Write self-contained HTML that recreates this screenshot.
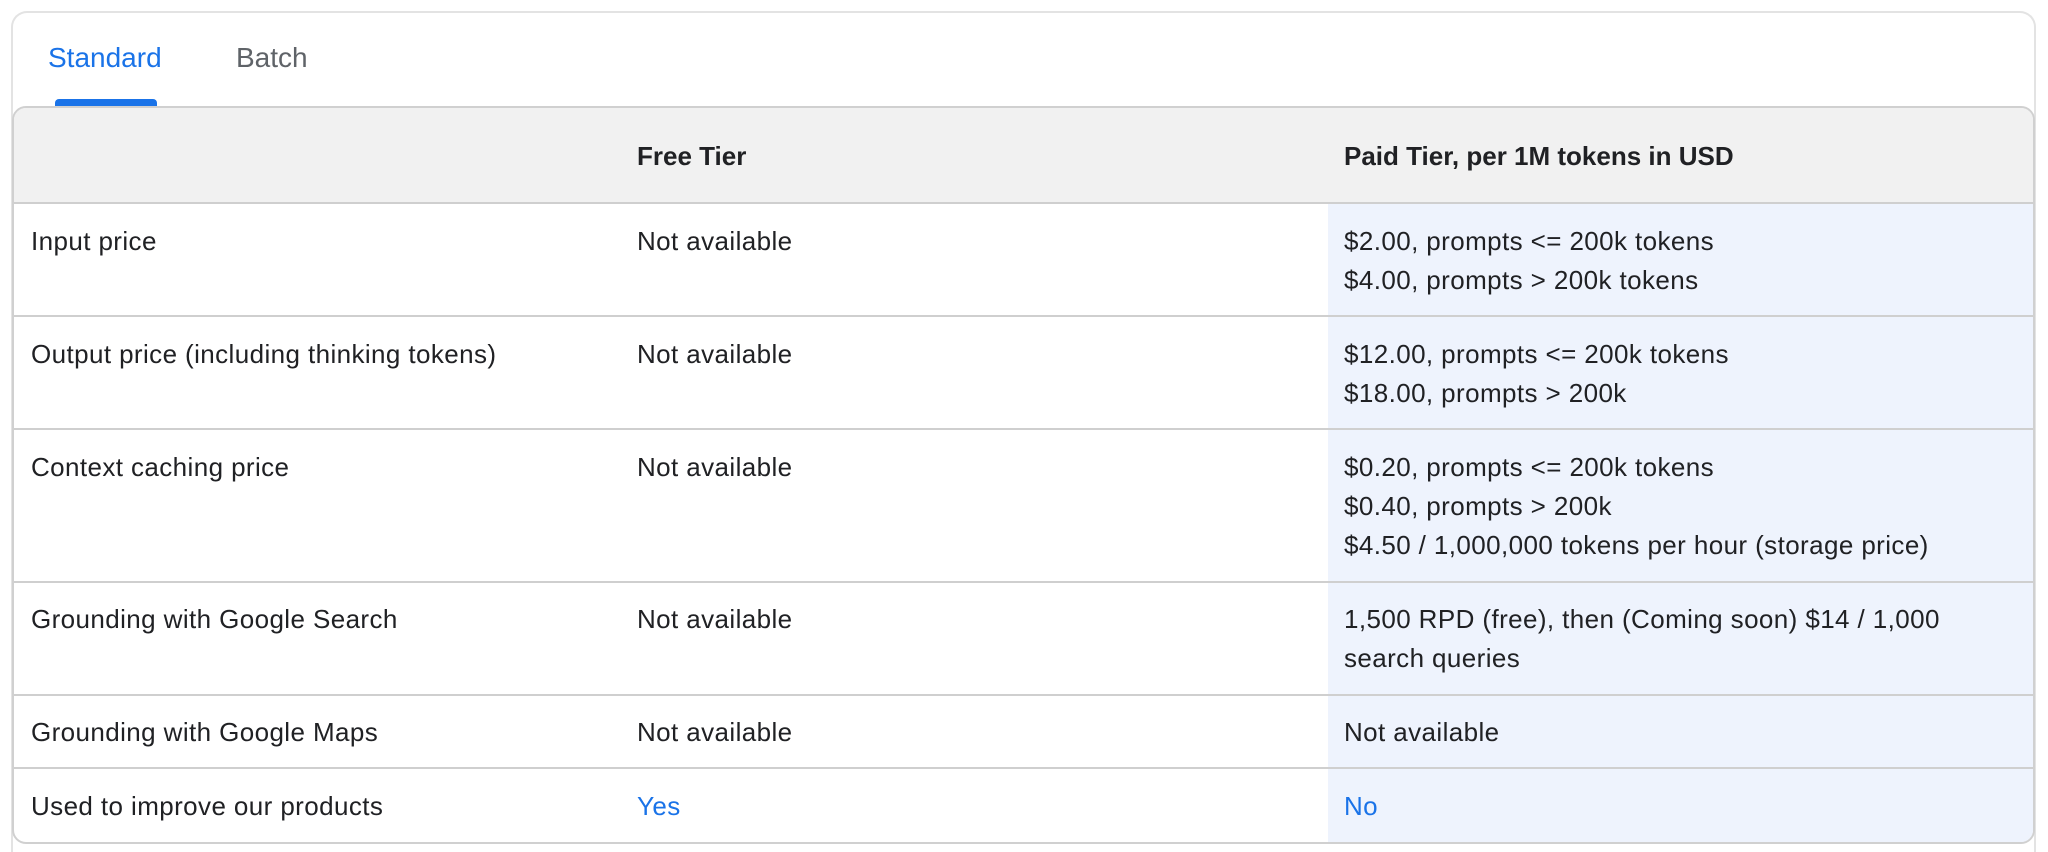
<!DOCTYPE html>
<html style="width:2048px;height:852px;overflow:hidden"><head><meta charset="utf-8"><style>
*{box-sizing:border-box;margin:0;padding:0}
body{width:2048px;height:852px;background:#fff;font-family:"Liberation Sans",Arial,sans-serif;color:#202124;position:relative;overflow:hidden}
.card{position:absolute;left:11px;top:11px;width:2025px;height:841px;border:2px solid #e3e3e3;border-bottom:none;border-radius:16px 16px 0 0}
.tab{position:absolute;top:42px;font-size:28px;line-height:32px}
.ul{position:absolute;left:55px;top:99px;width:102px;height:7px;background:#1a73e8;border-radius:4px 4px 0 0}
.tbl{position:absolute;left:12px;top:106px;width:2023px;height:738px;border:2px solid #d0d0d0;border-radius:14px;overflow:hidden;background:#fff}
.c3bg{position:absolute;left:1314px;top:95px;right:0;bottom:0;background:#eef3fd}
.hdr{position:absolute;left:0;top:0;right:0;height:96px;background:#f1f1f1;border-bottom:2px solid #cfcfcf}
.row{position:absolute;left:0;right:0;border-bottom:2px solid #cfcfcf}
.t{position:absolute;font-size:26px;line-height:39px;white-space:nowrap;letter-spacing:0.4px}
.b{color:#1a73e8}
</style></head><body>
<div class="card"></div>
<div class="tab" style="left:48px;color:#1a73e8">Standard</div>
<div class="tab" style="left:236px;color:#5f6368">Batch</div>
<div class="ul"></div>
<div class="tbl">
 <div class="c3bg"></div>
 <div class="hdr"></div>
 <div class="t" style="left:623px;top:29px;font-weight:bold;letter-spacing:0">Free Tier</div>
 <div class="t" style="left:1330px;top:29px;font-weight:bold;letter-spacing:0">Paid Tier, per 1M tokens in USD</div>

 <div class="row" style="top:96px;height:113px"></div>
 <div class="t" style="left:17px;top:114px">Input price</div>
 <div class="t" style="left:623px;top:114px">Not available</div>
 <div class="t" style="left:1330px;top:114px">$2.00, prompts &lt;= 200k tokens<br>$4.00, prompts &gt; 200k tokens</div>

 <div class="row" style="top:209px;height:113px"></div>
 <div class="t" style="left:17px;top:227px">Output price (including thinking tokens)</div>
 <div class="t" style="left:623px;top:227px">Not available</div>
 <div class="t" style="left:1330px;top:227px">$12.00, prompts &lt;= 200k tokens<br>$18.00, prompts &gt; 200k</div>

 <div class="row" style="top:322px;height:153px"></div>
 <div class="t" style="left:17px;top:340px">Context caching price</div>
 <div class="t" style="left:623px;top:340px">Not available</div>
 <div class="t" style="left:1330px;top:340px">$0.20, prompts &lt;= 200k tokens<br>$0.40, prompts &gt; 200k<br>$4.50 / 1,000,000 tokens per hour (storage price)</div>

 <div class="row" style="top:475px;height:113px"></div>
 <div class="t" style="left:17px;top:492px">Grounding with Google Search</div>
 <div class="t" style="left:623px;top:492px">Not available</div>
 <div class="t" style="left:1330px;top:492px">1,500 RPD (free), then (Coming soon) $14 / 1,000<br>search queries</div>

 <div class="row" style="top:588px;height:73px"></div>
 <div class="t" style="left:17px;top:605px">Grounding with Google Maps</div>
 <div class="t" style="left:623px;top:605px">Not available</div>
 <div class="t" style="left:1330px;top:605px">Not available</div>

 <div class="t" style="left:17px;top:679px">Used to improve our products</div>
 <div class="t b" style="left:623px;top:679px">Yes</div>
 <div class="t b" style="left:1330px;top:679px">No</div>
</div>
</body></html>
